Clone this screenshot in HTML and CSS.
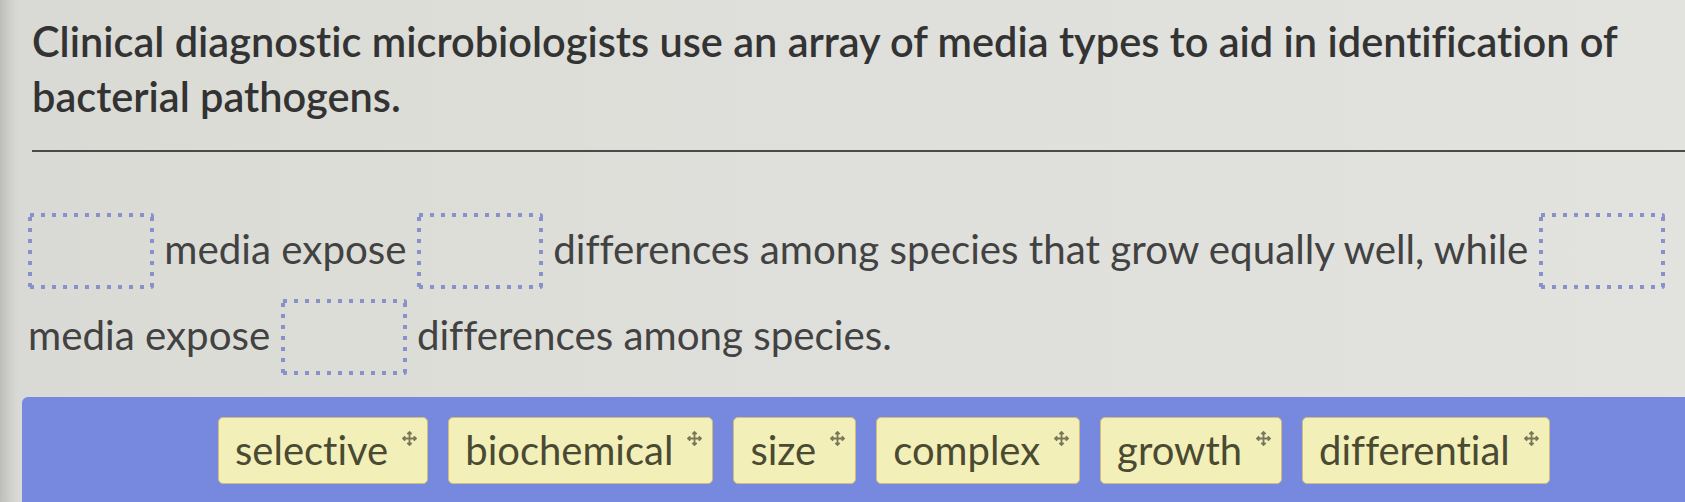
FILE: index.html
```html
<!DOCTYPE html>
<html lang="en">
<head>
<meta charset="utf-8">
<title>Media types</title>
<link rel="stylesheet" href="styles.css">
</head>
<body>
<main class="page">
  <h1 class="title">Clinical diagnostic microbiologists use an array of media types to aid in identification of bacterial pathogens.</h1>
  <hr class="rule">
  <p class="sentence"><span class="blank"></span> media expose <span class="blank"></span> differences among species that grow equally well, while <span class="blank"></span> media expose <span class="blank"></span> differences among species.</p>
  <section class="bank">
    <span class="chip">selective<svg class="move" viewBox="0 0 14 14"><path d="M7 1v12M1 7h12M5 3l2-2 2 2M5 11l2 2 2-2M3 5L1 7l2 2M11 5l2 2-2 2"/></svg></span>
    <span class="chip">biochemical<svg class="move" viewBox="0 0 14 14"><path d="M7 1v12M1 7h12M5 3l2-2 2 2M5 11l2 2 2-2M3 5L1 7l2 2M11 5l2 2-2 2"/></svg></span>
    <span class="chip">size<svg class="move" viewBox="0 0 14 14"><path d="M7 1v12M1 7h12M5 3l2-2 2 2M5 11l2 2 2-2M3 5L1 7l2 2M11 5l2 2-2 2"/></svg></span>
    <span class="chip">complex<svg class="move" viewBox="0 0 14 14"><path d="M7 1v12M1 7h12M5 3l2-2 2 2M5 11l2 2 2-2M3 5L1 7l2 2M11 5l2 2-2 2"/></svg></span>
    <span class="chip">growth<svg class="move" viewBox="0 0 14 14"><path d="M7 1v12M1 7h12M5 3l2-2 2 2M5 11l2 2 2-2M3 5L1 7l2 2M11 5l2 2-2 2"/></svg></span>
    <span class="chip">differential<svg class="move" viewBox="0 0 14 14"><path d="M7 1v12M1 7h12M5 3l2-2 2 2M5 11l2 2 2-2M3 5L1 7l2 2M11 5l2 2-2 2"/></svg></span>
  </section>
</main>
</body>
</html>
```

FILE: styles.css
```css
html, body {
  margin: 0;
  padding: 0;
  height: 100%;
  overflow: hidden;
}
body {
  background: linear-gradient(90deg, #bdbdb9 0px, #cfcfcb 10px, #d9d9d5 18px, #dcdcd7 200px, #dfdfdb 900px, #e2e2de 1685px);
  font-family: Lato, "Open Sans", sans-serif;
  font-variant-ligatures: none;
  color: #3b3b3b;
}
.page {
  padding: 14px 0 0 0;
}
.title {
  margin: 0 40px 0 32px;
  font-size: 41.5px;
  line-height: 55px;
  font-weight: 600;
  color: #333;
}
.rule {
  margin: 26px 0 0 32px;
  border: 0;
  height: 2px;
  background: #4a4a48;
}
.sentence {
  margin: 54px 0 0 28px;
  width: 1657px;
  font-size: 40.3px;
  line-height: 86px;
  color: #424242;
}
.blank {
  display: inline-block;
  width: 126px;
  height: 76px;
  vertical-align: middle;
  position: relative;
  top: -3px;
  background:
    linear-gradient(90deg, #8991cc 4px, transparent 4px) 2px 0 / 11px 4px repeat-x,
    linear-gradient(90deg, #8991cc 4px, transparent 4px) 2px 100% / 11px 4px repeat-x,
    linear-gradient(180deg, #8991cc 4px, transparent 4px) 0 4px / 4px 11px repeat-y,
    linear-gradient(180deg, #8991cc 4px, transparent 4px) 100% 4px / 4px 11px repeat-y;
  border-radius: 3px;
}
.bank {
  margin: 19px 0 0 22px;
  height: 200px;
  background: #7789df;
  border-radius: 6px 0 0 0;
  display: flex;
  gap: 20px;
  padding: 20px 0 0 196px;
  box-sizing: border-box;
  align-items: flex-start;
}
.chip {
  display: flex;
  align-items: flex-start;
  height: 67px;
  box-sizing: border-box;
  padding: 0 10px 0 16px;
  background: #f2efb9;
  border: 1.5px solid #d2bd78;
  border-radius: 5px;
  font-size: 40px;
  line-height: 64px;
  color: #4a4a32;
}
.move {
  width: 15px;
  height: 15px;
  margin: 13px 0 0 14px;
  fill: none;
  stroke: #77775a;
  stroke-width: 1.7;
}
```
